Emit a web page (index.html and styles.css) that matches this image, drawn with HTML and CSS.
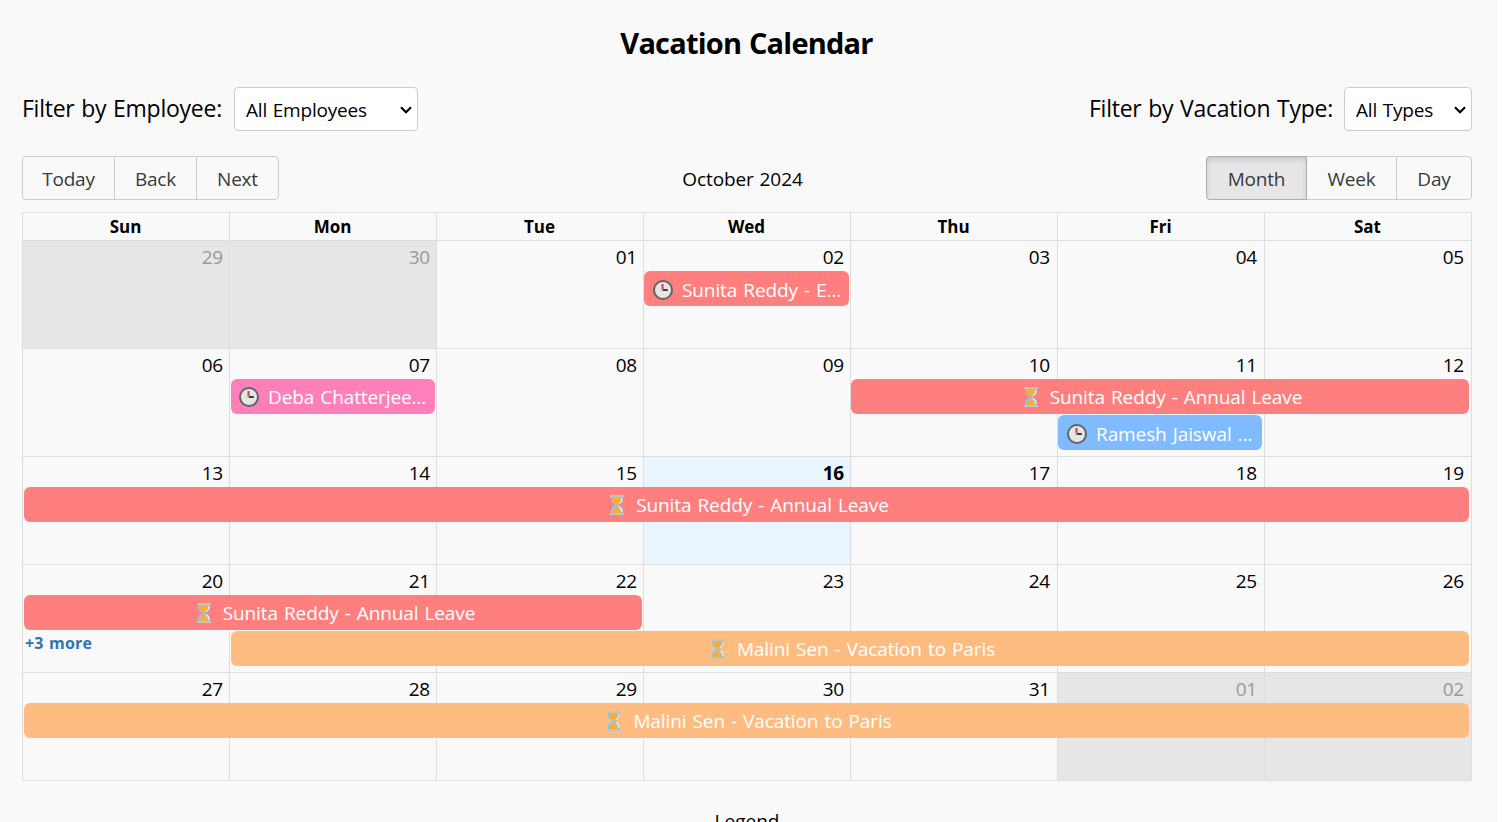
FILE: index.html
```
<!DOCTYPE html>
<html lang="en">
<head>
<meta charset="utf-8">
<title>Vacation Calendar</title>
<link rel="stylesheet" href="styles.css">
</head>
<body>
<svg class="sprite" width="0" height="0">
  <symbol id="clock" viewBox="0 0 20 20">
    <circle cx="10" cy="10" r="9" fill="#e6e6e6" stroke="#636363" stroke-width="2"/>
    <path d="M9.500 4v6" stroke="#d6375f" stroke-width="2"/>
    <path d="M9.200 10h5.600" stroke="#2b2b2b" stroke-width="1.800"/>
    <circle cx="8.800" cy="10" r="1.200" fill="#c4c4c4"/>
  </symbol>
  <symbol id="hourglass" viewBox="0 0 14 20">
    <path d="M1 1h12v4.200c0 2-3.800 3.300-3.800 4.800s3.800 2.800 3.800 4.800V19H1v-4.200c0-2 3.800-3.300 3.800-4.800S1 7.200 1 5.200z" fill="#8ac5f0"/>
    <path d="M11.700 3v2.200c0 1.300-1.800 2.300-2.800 3.300M11.700 17v-2.200c0-1.300-1.800-2.300-2.800-3.300" fill="none" stroke="#e3f2fd" stroke-width="1.300"/>
    <path d="M2 2h9.200v3c0 1.600-3.200 2.800-3.400 4.600v3.400c2 .8 3.400 2.400 3.400 5H2.400c0-2.600 1.600-4.200 3.800-5V9.600C6 7.800 2 6.600 2 5z" fill="#fcae2c"/>
    <path d="M0 0h14v2H0zM0 18h14v2H0z" fill="#bec4cb"/>
  </symbol>
</svg>
<main class="page">
  <h1 class="title">Vacation Calendar</h1>
  <div class="filters">
    <label class="filter filter-employee"><span class="filter-name">Filter by Employee:</span><select class="select select-employee"><option>All Employees</option></select><svg class="chevron" viewBox="0 0 12 8"><path d="M1 1.200l5 5 5-5"/></svg></label>
    <label class="filter filter-type"><span class="filter-name">Filter by Vacation Type:</span><select class="select select-type"><option>All Types</option></select><svg class="chevron" viewBox="0 0 12 8"><path d="M1 1.200l5 5 5-5"/></svg></label>
  </div>
  <div class="toolbar">
    <div class="group nav"><button class="btn">Today</button><button class="btn">Back</button><button class="btn">Next</button></div>
    <span class="period">October 2024</span>
    <div class="group views"><button class="btn active">Month</button><button class="btn week-btn">Week</button><button class="btn">Day</button></div>
  </div>
  <section class="calendar">
    <div class="days"><b>Sun</b><b>Mon</b><b>Tue</b><b>Wed</b><b>Thu</b><b>Fri</b><b>Sat</b></div>
    <div class="week">
      <span class="cell c1 off">29</span><span class="cell c2 off">30</span><span class="cell c3">01</span><span class="cell c4">02</span><span class="cell c5">03</span><span class="cell c6">04</span><span class="cell c7">05</span>
      <div class="event red single wed"><svg class="icon"><use href="#clock"/></svg><span>Sunita Reddy - E...</span></div>
    </div>
    <div class="week">
      <span class="cell c1">06</span><span class="cell c2">07</span><span class="cell c3">08</span><span class="cell c4">09</span><span class="cell c5">10</span><span class="cell c6">11</span><span class="cell c7">12</span>
      <div class="event pink single mon"><svg class="icon"><use href="#clock"/></svg><span>Deba Chatterjee...</span></div>
      <div class="event red thu-sat"><svg class="icon"><use href="#hourglass"/></svg><span>Sunita Reddy - Annual Leave</span></div>
      <div class="event blue single fri second"><svg class="icon"><use href="#clock"/></svg><span>Ramesh Jaiswal ...</span></div>
    </div>
    <div class="week">
      <span class="cell c1">13</span><span class="cell c2">14</span><span class="cell c3">15</span><span class="cell c4 today">16</span><span class="cell c5">17</span><span class="cell c6">18</span><span class="cell c7">19</span>
      <div class="event red full"><svg class="icon"><use href="#hourglass"/></svg><span>Sunita Reddy - Annual Leave</span></div>
    </div>
    <div class="week">
      <span class="cell c1">20</span><span class="cell c2">21</span><span class="cell c3">22</span><span class="cell c4">23</span><span class="cell c5">24</span><span class="cell c6">25</span><span class="cell c7">26</span>
      <div class="event red sun-tue"><svg class="icon"><use href="#hourglass"/></svg><span>Sunita Reddy - Annual Leave</span></div>
      <a class="more">+3 more</a>
      <div class="event orange mon-sat second"><svg class="icon"><use href="#hourglass"/></svg><span>Malini Sen - Vacation to Paris</span></div>
    </div>
    <div class="week">
      <span class="cell c1">27</span><span class="cell c2">28</span><span class="cell c3">29</span><span class="cell c4">30</span><span class="cell c5">31</span><span class="cell c6 off">01</span><span class="cell c7 off">02</span>
      <div class="event orange full"><svg class="icon"><use href="#hourglass"/></svg><span>Malini Sen - Vacation to Paris</span></div>
    </div>
  </section>
  <p class="legend">Legend</p>
</main>
</body>
</html>
```

FILE: styles.css
```
* { box-sizing: border-box; }
html { background: #fff; height: 822px; overflow: hidden; }
body { margin: 0; height: 822px; overflow: hidden; font-family: "Open Sans", "Noto Sans", sans-serif; font-size: 19px; color: #000; }
.sprite { display: block; }
.page { width: 1497px; height: 822px; padding: 22px 25px 0 22px; background: #f9f9f9; overflow: hidden; }
.title { margin: 0; height: 65px; padding-right: 1px; text-align: center; font-size: 29px; line-height: 41px; letter-spacing: -0.8px; word-spacing: 1px; }
.filters { display: flex; justify-content: space-between; height: 44px; }
.filter { position: relative; display: flex; align-items: center; justify-content: space-between; font-size: 23px; letter-spacing: -0.25px; word-spacing: 1px; white-space: nowrap; }
.filter-name { padding-bottom: 2px; }
.filter-employee { width: 396px; }
.filter-type { width: 383px; }
.select { height: 44px; padding: 2px 11px 0; border: 1px solid #ccc; border-radius: 4px; background: #fff; color: #000; font: inherit; font-size: 19px; letter-spacing: -0.2px; word-spacing: 1px; appearance: none; }
.select-employee { width: 184px; }
.select-type { width: 128px; }
.chevron { position: absolute; right: 6px; top: 19px; width: 12px; height: 8px; fill: none; stroke: #000; stroke-width: 2.2; pointer-events: none; }
.toolbar { display: flex; justify-content: space-between; align-items: center; margin: 25px 0 12px; height: 44px; }
.group { height: 44px; border: 1px solid #ccc; border-radius: 4px; }
.nav { display: grid; grid-template-columns: 91px 82px 82px; width: 257px; }
.views { display: grid; grid-template-columns: 100px 89px 75px; width: 266px; }
.btn { margin: 0; padding: 2px 0 0; border: 0; background: none; color: #373a3c; font: inherit; letter-spacing: -0.2px; text-align: center; }
.btn + .btn { border-left: 1px solid #ccc; }
.btn.week-btn { border-left: 0; }
.active { margin: -1px 0 -1px -1px; border: 1px solid #adadad; border-radius: 4px 0 0 4px; background: #e6e6e6; box-shadow: inset 0 3px 5px rgba(0, 0, 0, .125); }
.period { padding: 2px 0 0; letter-spacing: -0.1px; word-spacing: 1px; }
.calendar { width: 1450px; border: 1px solid #ddd; }
.days, .week { display: grid; grid-template-columns: 206px repeat(6, 207px); }
.days { height: 27px; font-size: 17px; line-height: 28px; text-align: center; }
.days b { padding-right: 1px; }
.days b + b { border-left: 1px solid #ddd; }
.week { height: 108px; grid-template-rows: 30px 36px 36px 1fr; border-top: 1px solid #ddd; }
.cell { grid-row: 1 / -1; padding: 0 6px 0 0; text-align: right; line-height: 33px; letter-spacing: -0.2px; }
.cell + .cell { border-left: 1px solid #ddd; }
.c1 { grid-column: 1; } .c2 { grid-column: 2; } .c3 { grid-column: 3; } .c4 { grid-column: 4; }
.c5 { grid-column: 5; } .c6 { grid-column: 6; } .c7 { grid-column: 7; }
.c5, .c6, .c7 { padding-right: 7px; }
.off { background: #e6e6e6; color: #999; }
.today { background: #eaf6ff; font-weight: 700; }
.event { grid-row: 2; z-index: 1; display: flex; align-items: center; justify-content: center; gap: 6px; height: 35px; border-radius: 6px; color: #fff; letter-spacing: -0.1px; word-spacing: 1.2px; white-space: nowrap; line-height: 35px; padding-top: 2px; }
.single { justify-content: flex-start; padding-left: 6px; }
.second { grid-row: 3; }
.icon { width: 26px; height: 20px; flex: none; margin-top: -1px; }
.red { background: #ff7f7f; }
.pink { background: #ff7fbb; }
.blue { background: #80bbff; }
.orange { background: #ffbc80; }
.wed { grid-column: 4; margin: 0 1px; padding-top: 3px; }
.mon { grid-column: 2; margin: 0 1px 0 2px; padding-left: 5px; }
.fri { grid-column: 6; margin: 0 2px 0 1px; padding-top: 3px; }
.thu-sat { grid-column: 5 / 8; margin: 0 2px 0 1px; }
.full { grid-column: 1 / 8; margin: 0 2px 0 1px; }
.sun-tue { grid-column: 1 / 4; margin: 0 1px; }
.mon-sat { grid-column: 2 / 8; margin: 0 2px; }
.more { grid-column: 1; grid-row: 3; padding-left: 2px; color: #3174ad; font-size: 16px; font-weight: 700; line-height: 24px; letter-spacing: 0.2px; word-spacing: 1px; }
.legend { margin: 25px 0 0; text-align: center; line-height: 30px; }
```
